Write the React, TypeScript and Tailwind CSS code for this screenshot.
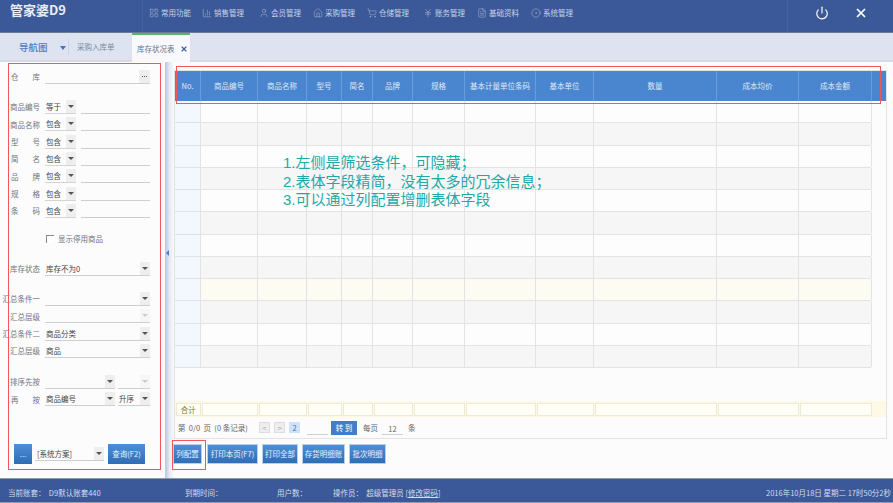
import React from "react";
import { Power, X, LayoutGrid, BarChart3, User, Home, ShoppingCart, JapaneseYen, FileText, CircleDot } from "lucide-react";

const F = '"Noto Sans CJK SC","Liberation Sans",sans-serif';

const nav: [string, React.ComponentType<any>, number][] = [
  ["常用功能", LayoutGrid, 53], ["销售管理", BarChart3, 57], ["会员管理", User, 54], ["采购管理", Home, 54],
  ["仓储管理", ShoppingCart, 56], ["账务管理", JapaneseYen, 54], ["基础资料", FileText, 54], ["系统管理", CircleDot, 54],
];

const cols: [string, number][] = [
  ["No.", 26], ["商品编号", 57], ["商品名称", 49], ["型号", 35], ["简名", 31], ["品牌", 40], ["规格", 52],
  ["基本计量单位条码", 71], ["基本单位", 58], ["数量", 123], ["成本均价", 82], ["成本金额", 73],
];

function Arrow({ dim }: { dim?: boolean }) {
  return (
    <span className={`flex h-[13px] w-[10px] shrink-0 items-center justify-center ${dim ? "bg-[#f6f6f6]" : "bg-[#eeeeee]"}`}>
      <span className={`h-0 w-0 border-x-[3px] border-t-[3px] border-x-transparent ${dim ? "border-t-[#cccccc]" : "border-t-[#555555]"}`} />
    </span>
  );
}

function Label({ children }: { children: string }) {
  const spread = children.length === 2;
  return (
    <span className="flex w-[40px] shrink-0 justify-end text-[7.5px] leading-none whitespace-nowrap text-[#6f7480]">
      <span className={spread ? "flex w-[29px] justify-between" : ""}>
        {spread ? children.split("").map((c) => <span key={c}>{c}</span>) : children}
      </span>
    </span>
  );
}

function OpRow({ label, op }: { label: string; op: string }) {
  return (
    <div className="flex h-[17.3px] items-center">
      <Label>{label}</Label>
      <span className="ml-[5px] flex w-[31px] items-center justify-between border-b border-[#d4d4d4] pl-[1px]">
        <span className="text-[7.5px] leading-[13px] text-[#444444]">{op}</span>
        <Arrow />
      </span>
      <span className="ml-[5px] h-[14px] w-[69px] border-b border-[#cfcfcf]" />
    </div>
  );
}

function SelRow({ label, value, dim }: { label: string; value?: string; dim?: boolean }) {
  return (
    <div className="flex h-[17.3px] items-center">
      <Label>{label}</Label>
      <span className="ml-[5px] flex w-[105px] items-center justify-between border-b border-[#cfcfcf] pl-[1px]">
        <span className="text-[7.5px] leading-[13px] text-[#444444]">{value}</span>
        <Arrow dim={dim} />
      </span>
    </div>
  );
}

function Btn({ children, w }: { children: string; w: number }) {
  return (
    <span
      style={{ width: w }}
      className="flex h-[20px] items-center justify-center whitespace-nowrap border border-[#b8cfe6] bg-gradient-to-b from-[#4f8fd8] to-[#2f6db5] text-[7.5px] text-[#eaf2fb]"
    >
      {children}
    </span>
  );
}

export default function App() {
  return (
    <div className="relative flex h-[503px] w-[893px] flex-col overflow-hidden bg-[#fcfcfc]" style={{ fontFamily: F }}>
      <header className="flex h-[33px] shrink-0 border-b border-[#6b7b95] bg-[#3b5998]">
        <div className="w-[143px] border-r border-[#41609e] pl-[10px] pt-[1px] text-[13px] leading-[18px] font-bold text-[#e8ecf4]">管家婆D9</div>
        <nav className="flex flex-1 items-start pl-[6px] pt-[7px]">
          {nav.map(([t, I, w]) => (
            <span key={t} style={{ width: w }} className="flex h-[11px] shrink-0 items-center gap-[2px] text-[7.5px] whitespace-nowrap text-[#c9d2e6]">
              <I size={10} strokeWidth={1} />
              {t}
            </span>
          ))}
        </nav>
        <div className="flex h-full w-[106px] gap-[25px] border-l border-[#46639f] pl-[27px] pt-[6px]">
          <Power size={14} strokeWidth={2} className="text-white" />
          <X size={14} strokeWidth={3} className="text-white" />
        </div>
      </header>

      <div className="flex h-[29px] shrink-0 items-end border-b-2 border-[#d3daea] bg-[#dde3f0]">
        <span className="mb-[6px] w-[51px] pl-[19px] text-[9.5px] leading-[14px] font-medium whitespace-nowrap text-[#4a7cc4]">导航图</span>
        <span className="mb-[10px] ml-[9px] h-0 w-0 border-x-[3px] border-t-[4px] border-x-transparent border-t-[#3f74c0]" />
        <span className="mb-[5px] ml-[2px] flex h-[16px] w-[62px] items-center border-l border-[#ced5e5] pl-[8px] text-[7.5px] whitespace-nowrap text-[#7d8aa0]">采购入库单</span>
        <span className="-mb-[2px] ml-[2px] flex h-[29px] w-[58px] items-center gap-[5px] border-t-2 border-[#53b865] bg-[#f7f9fc] pl-[5px] text-[7.5px] whitespace-nowrap text-[#66758c]">
          库存状况表
          <X size={8} strokeWidth={3.5} className="text-[#3f5f96]" />
        </span>
      </div>

      <main className="flex min-h-0 flex-1">
        <aside className="flex w-[165px] shrink-0 flex-col pt-[8.5px]">
          <div className="flex h-[13px] items-center">
            <Label>仓库</Label>
            <span className="ml-[5px] flex h-[14px] w-[105px] justify-end border-b border-[#cfcfcf]">
              <span className="flex w-[11px] items-center justify-center gap-[1px] bg-[#eeeeee]">
                <span className="h-px w-px bg-[#555555]" />
                <span className="h-px w-px bg-[#555555]" />
                <span className="h-px w-px bg-[#555555]" />
              </span>
            </span>
          </div>
          <div className="mt-[15px]">
            <OpRow label="商品编号" op="等于" />
            <OpRow label="商品名称" op="包含" />
            <OpRow label="型号" op="包含" />
            <OpRow label="简名" op="包含" />
            <OpRow label="品牌" op="包含" />
            <OpRow label="规格" op="包含" />
            <OpRow label="条码" op="包含" />
          </div>
          <div className="ml-[46px] mt-[15.5px] flex h-[8px] items-center gap-[4px] text-[7.5px] leading-none text-[#6f7480]">
            <span className="h-[8px] w-[8px] border-t border-l border-[#888888] bg-white" />
            显示停用商品
          </div>
          <div className="mt-[17.3px]"><SelRow label="库存状态" value="库存不为0" /></div>
          <div className="mt-[12.7px]">
            <SelRow label="汇总条件一" />
            <SelRow label="汇总层级" dim />
            <SelRow label="汇总条件二" value="商品分类" />
            <SelRow label="汇总层级" value="商品" />
          </div>
          <div className="mt-[13.8px]">
            <div className="flex h-[17.3px] items-center">
              <Label>排序先按</Label>
              <span className="ml-[5px] flex w-[70px] justify-end border-b border-[#cfcfcf]"><Arrow /></span>
              <span className="ml-[3px] flex w-[32px] justify-end border-b border-[#cfcfcf]"><Arrow dim /></span>
            </div>
            <div className="flex h-[17.3px] items-center">
              <Label>再按</Label>
              <span className="ml-[5px] flex w-[70px] items-center justify-between border-b border-[#cfcfcf] pl-[1px]">
                <span className="text-[7.5px] leading-[13px] text-[#444444]">商品编号</span><Arrow />
              </span>
              <span className="ml-[3px] flex w-[32px] items-center justify-between border-b border-[#cfcfcf] pl-[1px]">
                <span className="text-[7.5px] leading-[13px] text-[#444444]">升序</span><Arrow />
              </span>
            </div>
          </div>
          <div className="ml-[14px] mt-[36px] flex items-center">
            <span className="flex h-[20px] w-[18px] items-center justify-center bg-gradient-to-b from-[#4f8fd8] to-[#2f6db5] text-[8px] text-[#cfe0f4]">...</span>
            <span className="ml-[3px] flex w-[69px] items-center justify-between border-b border-[#cfcfcf] pl-[2px]">
              <span className="text-[7.5px] leading-[13px] text-[#444444]">[系统方案]</span><Arrow />
            </span>
            <span className="ml-[4px] flex h-[20px] w-[37px] items-center justify-center bg-gradient-to-b from-[#4f8fd8] to-[#2f6db5] text-[7.5px] whitespace-nowrap text-[#eaf2fb]">查询(F2)</span>
          </div>
        </aside>

        <div className="flex w-[9px] shrink-0 items-start justify-start bg-gradient-to-r from-[#b9c6da] via-[#e6eaf2] to-[#fafafa] pl-[1px] pt-[188px]">
          <span className="h-0 w-0 border-y-[3px] border-r-[3px] border-y-transparent border-r-[#4a80c8]" />
        </div>

        <section className="flex w-[713px] flex-col pt-[8px]">
          <div className="flex h-[369px] flex-col border border-[#e2e2e2]">
            <div className="flex h-[30px] shrink-0 bg-[#4a86d0]">
              {cols.map(([t, w]) => (
                <span key={t} style={{ width: w }} className="flex shrink-0 items-center justify-center border-r border-[#6a9cdb] text-[7.5px] whitespace-nowrap text-[#dfe9f7]">{t}</span>
              ))}
            </div>
            <div className="h-[300px] shrink-0">
              {Array.from({ length: 12 }).map((_, i) => (
                <div key={i} className={`flex h-[22.25px] w-[696px] border-b border-[#e3e3e3] ${i === 8 ? "bg-[#fcfcf2]" : i % 2 === 1 ? "bg-[#f6f6f6]" : "bg-[#fdfdfd]"}`}>
                  {cols.map(([t, w], j) => (
                    <span key={t} style={{ width: w }} className={`shrink-0 border-r border-[#e3e3e3] ${j === 0 ? "bg-[#f3f8fe]" : ""}`} />
                  ))}
                </div>
              ))}
            </div>
            <div className="flex h-[16px] shrink-0 items-center gap-[1.5px] bg-[#fdf9e4] pl-[1px]">
              {cols.map(([t, w], j) => (
                <span key={t} style={{ width: w - 1.5 }} className={`h-[13px] shrink-0 border border-[#ecebd5] bg-[#fffff8] ${j === 0 ? "text-center text-[7.5px] leading-[11px] text-[#7d7a22]" : ""}`}>
                  {j === 0 ? "合计" : ""}
                </span>
              ))}
            </div>
            <div className="flex flex-1 items-center pl-[3px] text-[7.5px] whitespace-pre text-[#666666]">
              <span className="w-[74px]">第  0/0  页  (0 条记录)</span>
              <span className="ml-[7px] flex h-[11px] w-[11px] items-center justify-center border border-[#dddddd] bg-[#eeeeee] text-[#aaaaaa]">&lt;</span>
              <span className="ml-[4px] flex h-[11px] w-[11px] items-center justify-center border border-[#dddddd] bg-[#eeeeee] text-[#aaaaaa]">&gt;</span>
              <span className="ml-[4px] flex h-[11px] w-[11px] items-center justify-center bg-[#cfe2f7] text-[#3f74c0]">2</span>
              <span className="ml-[7px] h-[14px] w-[21px] border-b border-[#cfcfcf]" />
              <span className="ml-[3px] flex h-[14px] w-[26px] items-center justify-center bg-[#3f7fca] text-white">转 到</span>
              <span className="ml-[6px]">每页</span>
              <span className="ml-[4px] h-[14px] w-[21px] border-b border-[#cfcfcf] pt-[2px] text-center">12</span>
              <span className="ml-[5px]">条</span>
            </div>
          </div>
          <div className="ml-[-1px] mt-[5px] flex gap-[4px]">
            <Btn w={29}>列配置</Btn>
            <span className="ml-[1px] flex"><Btn w={51}>打印本页(F7)</Btn></span>
            <Btn w={36}>打印全部</Btn>
            <Btn w={43}>存货明细账</Btn>
            <Btn w={37}>批次明细</Btn>
          </div>
        </section>
      </main>

      <footer className="flex h-[25px] shrink-0 items-center border-t border-[#8f9bb0] border-b border-b-[#8f9bb0] bg-[#3b5998] pt-[5px] text-[7.5px] whitespace-pre text-[#d5dcec]">
        <span className="ml-[8px] w-[177px]">当前账套：  D9默认账套440</span>
        <span className="w-[92px]">到期时间：</span>
        <span className="w-[56px]">用户数：</span>
        <span>操作员：  超级管理员 [<span className="underline">修改密码</span>]</span>
        <span className="ml-auto mr-[2px]">2016年10月18日 星期二 17时50分2秒</span>
      </footer>

      <div className="pointer-events-none absolute left-[8px] top-[63px] h-[407px] w-[153px] border border-[#f0565c]" />
      <div className="pointer-events-none absolute left-[176px] top-[66px] h-[38px] w-[705px] border border-[#f0565c]" />
      <div className="pointer-events-none absolute left-[172px] top-[440px] h-[30px] w-[34px] border border-[#f0565c]" />
      <div className="absolute left-[283px] top-[154px] text-[15px] leading-[18.5px] text-[#1ea8a8] [font-family:'Liberation_Sans','Noto_Sans_CJK_SC',sans-serif]">
        <div>1.左侧是筛选条件，可隐藏；</div>
        <div>2.表体字段精简，没有太多的冗余信息；</div>
        <div>3.可以通过列配置增删表体字段</div>
      </div>
    </div>
  );
}
